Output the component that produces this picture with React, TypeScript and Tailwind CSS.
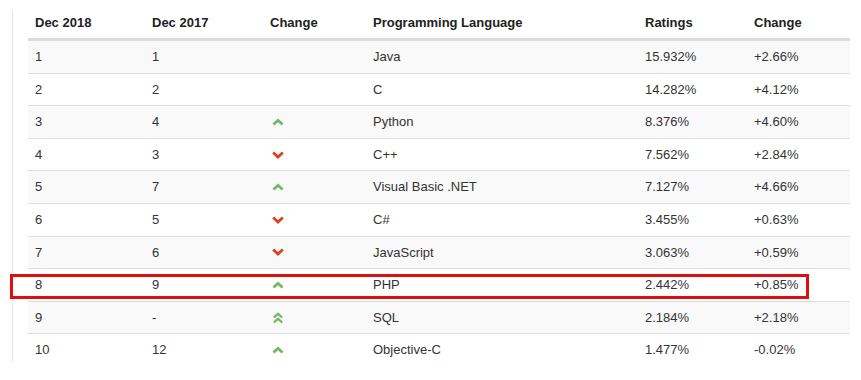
import React from "react";

type Row = { y18: string; y17: string; dir: "up" | "down" | "up2" | null; lang: string; rating: string; change: string };

const rows: Row[] = [
  { y18: "1", y17: "1", dir: null, lang: "Java", rating: "15.932%", change: "+2.66%" },
  { y18: "2", y17: "2", dir: null, lang: "C", rating: "14.282%", change: "+4.12%" },
  { y18: "3", y17: "4", dir: "up", lang: "Python", rating: "8.376%", change: "+4.60%" },
  { y18: "4", y17: "3", dir: "down", lang: "C++", rating: "7.562%", change: "+2.84%" },
  { y18: "5", y17: "7", dir: "up", lang: "Visual Basic .NET", rating: "7.127%", change: "+4.66%" },
  { y18: "6", y17: "5", dir: "down", lang: "C#", rating: "3.455%", change: "+0.63%" },
  { y18: "7", y17: "6", dir: "down", lang: "JavaScript", rating: "3.063%", change: "+0.59%" },
  { y18: "8", y17: "9", dir: "up", lang: "PHP", rating: "2.442%", change: "+0.85%" },
  { y18: "9", y17: "-", dir: "up2", lang: "SQL", rating: "2.184%", change: "+2.18%" },
  { y18: "10", y17: "12", dir: "up", lang: "Objective-C", rating: "1.477%", change: "-0.02%" },
];

const cols = ["w-[117px]", "w-[118px]", "w-[103px]", "w-[272px]", "w-[109px]", "w-[103px]"];

const Chevron = ({ dir }: { dir: Row["dir"] }) => {
  if (!dir) return null;
  if (dir === "down")
    return (
      <svg width="12" height="8" viewBox="0 0 12 8" className="ml-[2px]">
        <path d="M1.2 1.5 L6 6 L10.8 1.5" fill="none" stroke="#e0401c" strokeWidth="2.8" />
      </svg>
    );
  if (dir === "up2")
    return (
      <svg width="12" height="12" viewBox="0 0 12 12" className="ml-[2px]">
        <path d="M1.8 5.5 L6 1.8 L10.2 5.5 M1.8 10.5 L6 6.8 L10.2 10.5" fill="none" stroke="#73b760" strokeWidth="2.2" />
      </svg>
    );
  return (
    <svg width="12" height="8" viewBox="0 0 12 8" className="ml-[2px]">
      <path d="M1.5 6.5 L6 2.3 L10.5 6.5" fill="none" stroke="#73b760" strokeWidth="2.8" />
    </svg>
  );
};

export default function App() {
  return (
    <div className="relative w-[861px] h-[380px] bg-white flex font-['Liberation_Sans',Arial,sans-serif] text-[13px] text-[#333]">
      <div className="ml-[12px] mt-[10px] h-[352px] w-px bg-[#e5e5e5]" />
      <div className="ml-[15px] flex flex-col">
        <div className="flex h-[40px] items-center border-b-2 border-[#dddddd] font-bold text-[#222]">
          {["Dec 2018", "Dec 2017", "Change", "Programming Language", "Ratings", "Change"].map((h, i) => (
            <div key={i} className={`${cols[i]} px-[7px] pt-[7px]`}>
              {h}
            </div>
          ))}
        </div>
        {rows.map((r, i) => (
          <div
            key={i}
            className={`flex h-[32.6px] items-center border-t border-[#dddddd] first:border-t-0 ${i % 2 === 0 ? "bg-[#f9f9f9]" : "bg-white"}`}
          >
            <div className={`${cols[0]} px-[7px]`}>{r.y18}</div>
            <div className={`${cols[1]} px-[7px]`}>{r.y17}</div>
            <div className={`${cols[2]} px-[7px] flex items-center`}>
              <Chevron dir={r.dir} />
            </div>
            <div className={`${cols[3]} px-[7px]`}>{r.lang}</div>
            <div className={`${cols[4]} px-[7px]`}>{r.rating}</div>
            <div className={`${cols[5]} px-[7px]`}>{r.change}</div>
          </div>
        ))}
      </div>
      <div className="absolute left-[10px] top-[274px] w-[799px] h-[25px] border-[3px] border-[#e00f0f]" />
    </div>
  );
}
